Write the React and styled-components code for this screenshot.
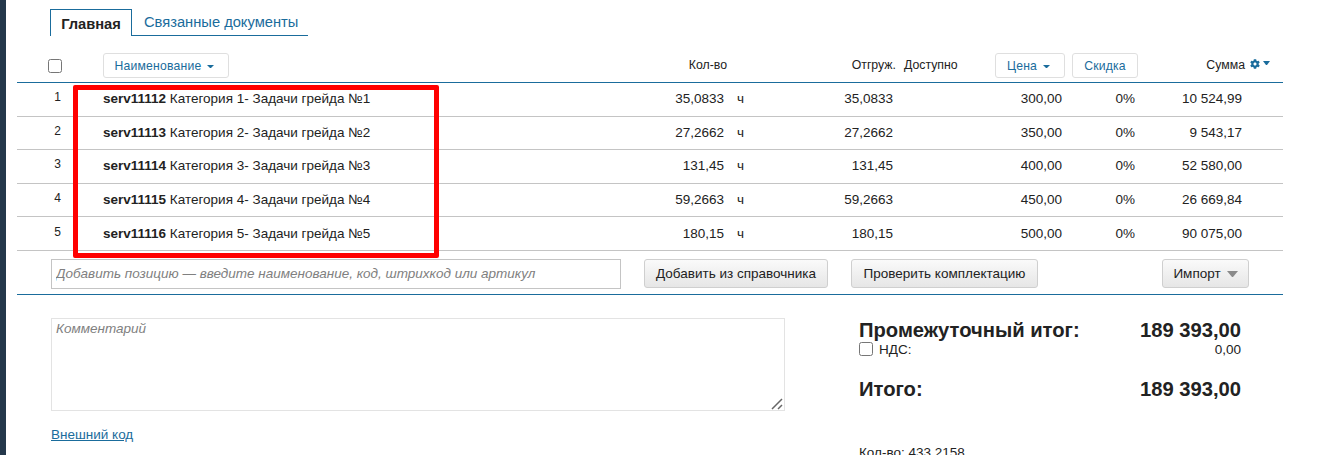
import React from 'react';
import styled, { createGlobalStyle } from 'styled-components';
import { FaCog } from 'react-icons/fa';

const GlobalStyle = createGlobalStyle`
  html, body {
    margin: 0;
    padding: 0;
    height: 455px;
    overflow: hidden;
    background: #fff;
  }
  body {
    font-family: "Liberation Sans", Arial, sans-serif;
    font-size: 13.5px;
    color: #222;
  }
  * {
    box-sizing: border-box;
  }
`;

const COLUMNS = '45px 41px 521px 100px 13px 56px 100px 11px 58px 100px 73px 107px 41px';
const BLUE = '#1a6c9c';

const Page = styled.div`
  display: flex;
  height: 455px;
  position: relative;
`;

const Sidebar = styled.div`
  width: 6px;
  background: #24384b;
  flex-shrink: 0;
`;

const Main = styled.div`
  width: 1266px;
  margin-left: 11px;
`;

const Tabs = styled.div`
  display: flex;
  padding: 9px 0 0 33px;
  height: 36px;
`;

const ActiveTab = styled.div`
  width: 82px;
  height: 27px;
  border: 1px solid ${BLUE};
  border-bottom: 0;
  font-weight: bold;
  font-size: 14.7px;
  line-height: 29px;
  text-align: center;
  color: #222;
`;

const Tab = styled.div`
  width: 176px;
  height: 27px;
  border-bottom: 1px solid ${BLUE};
  font-size: 14.7px;
  line-height: 27px;
  padding-left: 12px;
  color: ${BLUE};
`;

const HeaderRow = styled.div`
  display: grid;
  grid-template-columns: ${COLUMNS};
  align-items: center;
  height: 47px;
  padding-top: 13px;
  border-bottom: 1px solid ${BLUE};
  font-size: 12.3px;
`;

const Row = styled.div`
  display: grid;
  grid-template-columns: ${COLUMNS};
  align-items: center;
  height: 33.6px;
  padding-bottom: 1px;
  border-bottom: 1px solid #c4c4c4;
`;

const Check = styled.input.attrs({ type: 'checkbox' })`
  margin: 0;
  width: 14px;
  height: 14px;
`;

const HeadCheck = styled(Check)`
  grid-column: 1;
  justify-self: end;
`;

const HeadButton = styled.div`
  display: inline-flex;
  align-items: center;
  justify-content: center;
  gap: 6px;
  width: ${(p) => p.$width}px;
  height: 25px;
  padding-right: ${(p) => (p.$caret ? 3 : 0)}px;
  border: 1px solid #dfdfdf;
  border-radius: 3px;
  color: ${BLUE};
  font-size: 12.2px;
  letter-spacing: 0.2px;
  justify-self: ${(p) => (p.$left ? 'start' : 'end')};
  margin-right: ${(p) => (p.$left ? 0 : -3)}px;
  grid-column: ${(p) => p.$col};
`;

const SmallCaret = styled.span`
  width: 7px;
  height: 5px;
  margin-top: 3px;
  border-top: 3px solid ${BLUE};
  border-left: 3.5px solid transparent;
  border-right: 3.5px solid transparent;
`;

const HeadLabel = styled.div`
  grid-column: ${(p) => p.$col};
  justify-self: ${(p) => (p.$left ? 'start' : 'end')};
  margin-right: ${(p) => (p.$left ? 0 : -3)}px;
  margin-top: -1px;
  white-space: nowrap;
`;

const SumTools = styled.div`
  grid-column: 13;
  display: flex;
  align-items: center;
  gap: 3px;
  padding-left: 8px;
  margin-top: -3px;
  color: ${BLUE};
  font-size: 10px;
`;

const TinyCaret = styled.span`
  width: 7px;
  height: 4px;
  margin-top: -2px;
  border-top: 4px solid ${BLUE};
  border-left: 3.5px solid transparent;
  border-right: 3.5px solid transparent;
`;

const NumCell = styled.div`
  grid-column: 1;
  justify-self: end;
  margin-right: 1px;
  margin-top: -3px;
  font-size: 12px;
`;

const NameCell = styled.div`
  grid-column: 3;
  white-space: nowrap;
`;

const Code = styled.b`
  font-weight: bold;
`;

const Value = styled.div`
  grid-column: ${(p) => p.$col};
  justify-self: ${(p) => (p.$left ? 'start' : 'end')};
  white-space: nowrap;
`;

const AddRow = styled.div`
  display: flex;
  align-items: flex-start;
  height: 44px;
  padding: 8px 34px 0;
  border-bottom: 1px solid ${BLUE};
`;

const AddInput = styled.input`
  width: 570px;
  height: 30px;
  margin-right: 23px;
  padding: 0 4px;
  border: 1px solid #c4c4c4;
  border-radius: 0;
  outline: none;
  font-family: inherit;
  font-size: 13.5px;
  &::placeholder {
    color: #808080;
    font-style: italic;
    opacity: 1;
  }
`;

const ActionButton = styled.div`
  display: flex;
  align-items: center;
  justify-content: center;
  gap: 6px;
  width: ${(p) => p.$width}px;
  height: 29px;
  margin-left: ${(p) => (p.$push ? 'auto' : 0)};
  margin-right: ${(p) => p.$after || 0}px;
  border: 1px solid #cfcfcf;
  border-radius: 3px;
  background: linear-gradient(#fafafa, #e6e6e6);
  color: #222;
  font-size: 13.5px;
`;

const GreyCaret = styled.span`
  width: 11px;
  height: 6px;
  margin-top: 2px;
  border-top: 6px solid #8a8a8a;
  border-left: 5.5px solid transparent;
  border-right: 5.5px solid transparent;
`;

const Bottom = styled.div`
  display: flex;
  padding: 23px 42px 0 34px;
`;

const LeftCol = styled.div`
  width: 734px;
  margin-right: 74px;
`;

const CommentBox = styled.div`
  position: relative;
  height: 93px;
`;

const Comment = styled.textarea`
  display: block;
  width: 734px;
  height: 93px;
  padding: 2px 4px;
  border: 1px solid #e3e3e3;
  border-radius: 0;
  outline: none;
  resize: none;
  font-family: inherit;
  font-size: 13.5px;
  &::placeholder {
    color: #808080;
    font-style: italic;
    opacity: 1;
  }
`;

const Grip = styled.svg`
  position: absolute;
  right: 1px;
  bottom: 1px;
  width: 13px;
  height: 13px;
`;

const ExternalLink = styled.a`
  display: inline-block;
  margin-top: 16px;
  color: ${BLUE};
  font-size: 13.5px;
  text-decoration: underline;
`;

const RightCol = styled.div`
  flex: 1;
`;

const TotalRow = styled.div`
  display: flex;
  justify-content: space-between;
  font-weight: bold;
  font-size: 20.2px;
  line-height: 24px;
  margin-top: ${(p) => p.$top || 0}px;
`;

const TaxRow = styled.div`
  display: flex;
  justify-content: space-between;
  align-items: center;
  height: 15px;
  font-size: 13.5px;
`;

const TaxLabel = styled.label`
  display: flex;
  align-items: center;
  gap: 6px;
`;

const Count = styled.div`
  margin-top: 44px;
  font-size: 13.5px;
`;

const RedFrame = styled.div`
  position: absolute;
  left: 73px;
  top: 85px;
  width: 366px;
  height: 173px;
  border: 5px solid #ff0000;
  border-radius: 2px;
  pointer-events: none;
`;

const rows = [
  { code: 'serv11112', name: 'Категория 1- Задачи грейда №1', qty: '35,0833', price: '300,00', sum: '10 524,99' },
  { code: 'serv11113', name: 'Категория 2- Задачи грейда №2', qty: '27,2662', price: '350,00', sum: '9 543,17' },
  { code: 'serv11114', name: 'Категория 3- Задачи грейда №3', qty: '131,45', price: '400,00', sum: '52 580,00' },
  { code: 'serv11115', name: 'Категория 4- Задачи грейда №4', qty: '59,2663', price: '450,00', sum: '26 669,84' },
  { code: 'serv11116', name: 'Категория 5- Задачи грейда №5', qty: '180,15', price: '500,00', sum: '90 075,00' },
];

const App = () => (
  <Page>
    <GlobalStyle />
    <Sidebar />
    <Main>
      <Tabs>
        <ActiveTab>Главная</ActiveTab>
        <Tab>Связанные документы</Tab>
      </Tabs>
      <HeaderRow>
        <HeadCheck />
        <HeadButton $col={3} $width={126} $left $caret>
          Наименование <SmallCaret />
        </HeadButton>
        <HeadLabel $col={4}>Кол-во</HeadLabel>
        <HeadLabel $col={7}>Отгруж.</HeadLabel>
        <HeadLabel $col={9} $left>Доступно</HeadLabel>
        <HeadButton $col={10} $width={70} $caret>
          Цена <SmallCaret />
        </HeadButton>
        <HeadButton $col={11} $width={66}>Скидка</HeadButton>
        <HeadLabel $col={12}>Сумма</HeadLabel>
        <SumTools>
          <FaCog size={10} />
          <TinyCaret />
        </SumTools>
      </HeaderRow>
      {rows.map((row, index) => (
        <Row key={row.code}>
          <NumCell>{index + 1}</NumCell>
          <NameCell>
            <Code>{row.code}</Code> {row.name}
          </NameCell>
          <Value $col={4}>{row.qty}</Value>
          <Value $col={6} $left>ч</Value>
          <Value $col={7}>{row.qty}</Value>
          <Value $col={10}>{row.price}</Value>
          <Value $col={11}>0%</Value>
          <Value $col={12}>{row.sum}</Value>
        </Row>
      ))}
      <AddRow>
        <AddInput placeholder="Добавить позицию — введите наименование, код, штрихкод или артикул" />
        <ActionButton $width={184} $after={23}>Добавить из справочника</ActionButton>
        <ActionButton $width={187}>Проверить комплектацию</ActionButton>
        <ActionButton $width={87} $push>
          Импорт <GreyCaret />
        </ActionButton>
      </AddRow>
      <Bottom>
        <LeftCol>
          <CommentBox>
            <Comment placeholder="Комментарий" />
            <Grip viewBox="0 0 13 13">
              <path d="M1 12 L11 2 M7 12 L11 8" stroke="#666" strokeWidth="1.5" fill="none" />
            </Grip>
          </CommentBox>
          <ExternalLink>Внешний код</ExternalLink>
        </LeftCol>
        <RightCol>
          <TotalRow>
            <span>Промежуточный итог:</span>
            <span>189 393,00</span>
          </TotalRow>
          <TaxRow>
            <TaxLabel>
              <Check /> НДС:
            </TaxLabel>
            <span>0,00</span>
          </TaxRow>
          <TotalRow $top={20}>
            <span>Итого:</span>
            <span>189 393,00</span>
          </TotalRow>
          <Count>Кол-во: 433,2158</Count>
        </RightCol>
      </Bottom>
    </Main>
    <RedFrame />
  </Page>
);

export default App;
